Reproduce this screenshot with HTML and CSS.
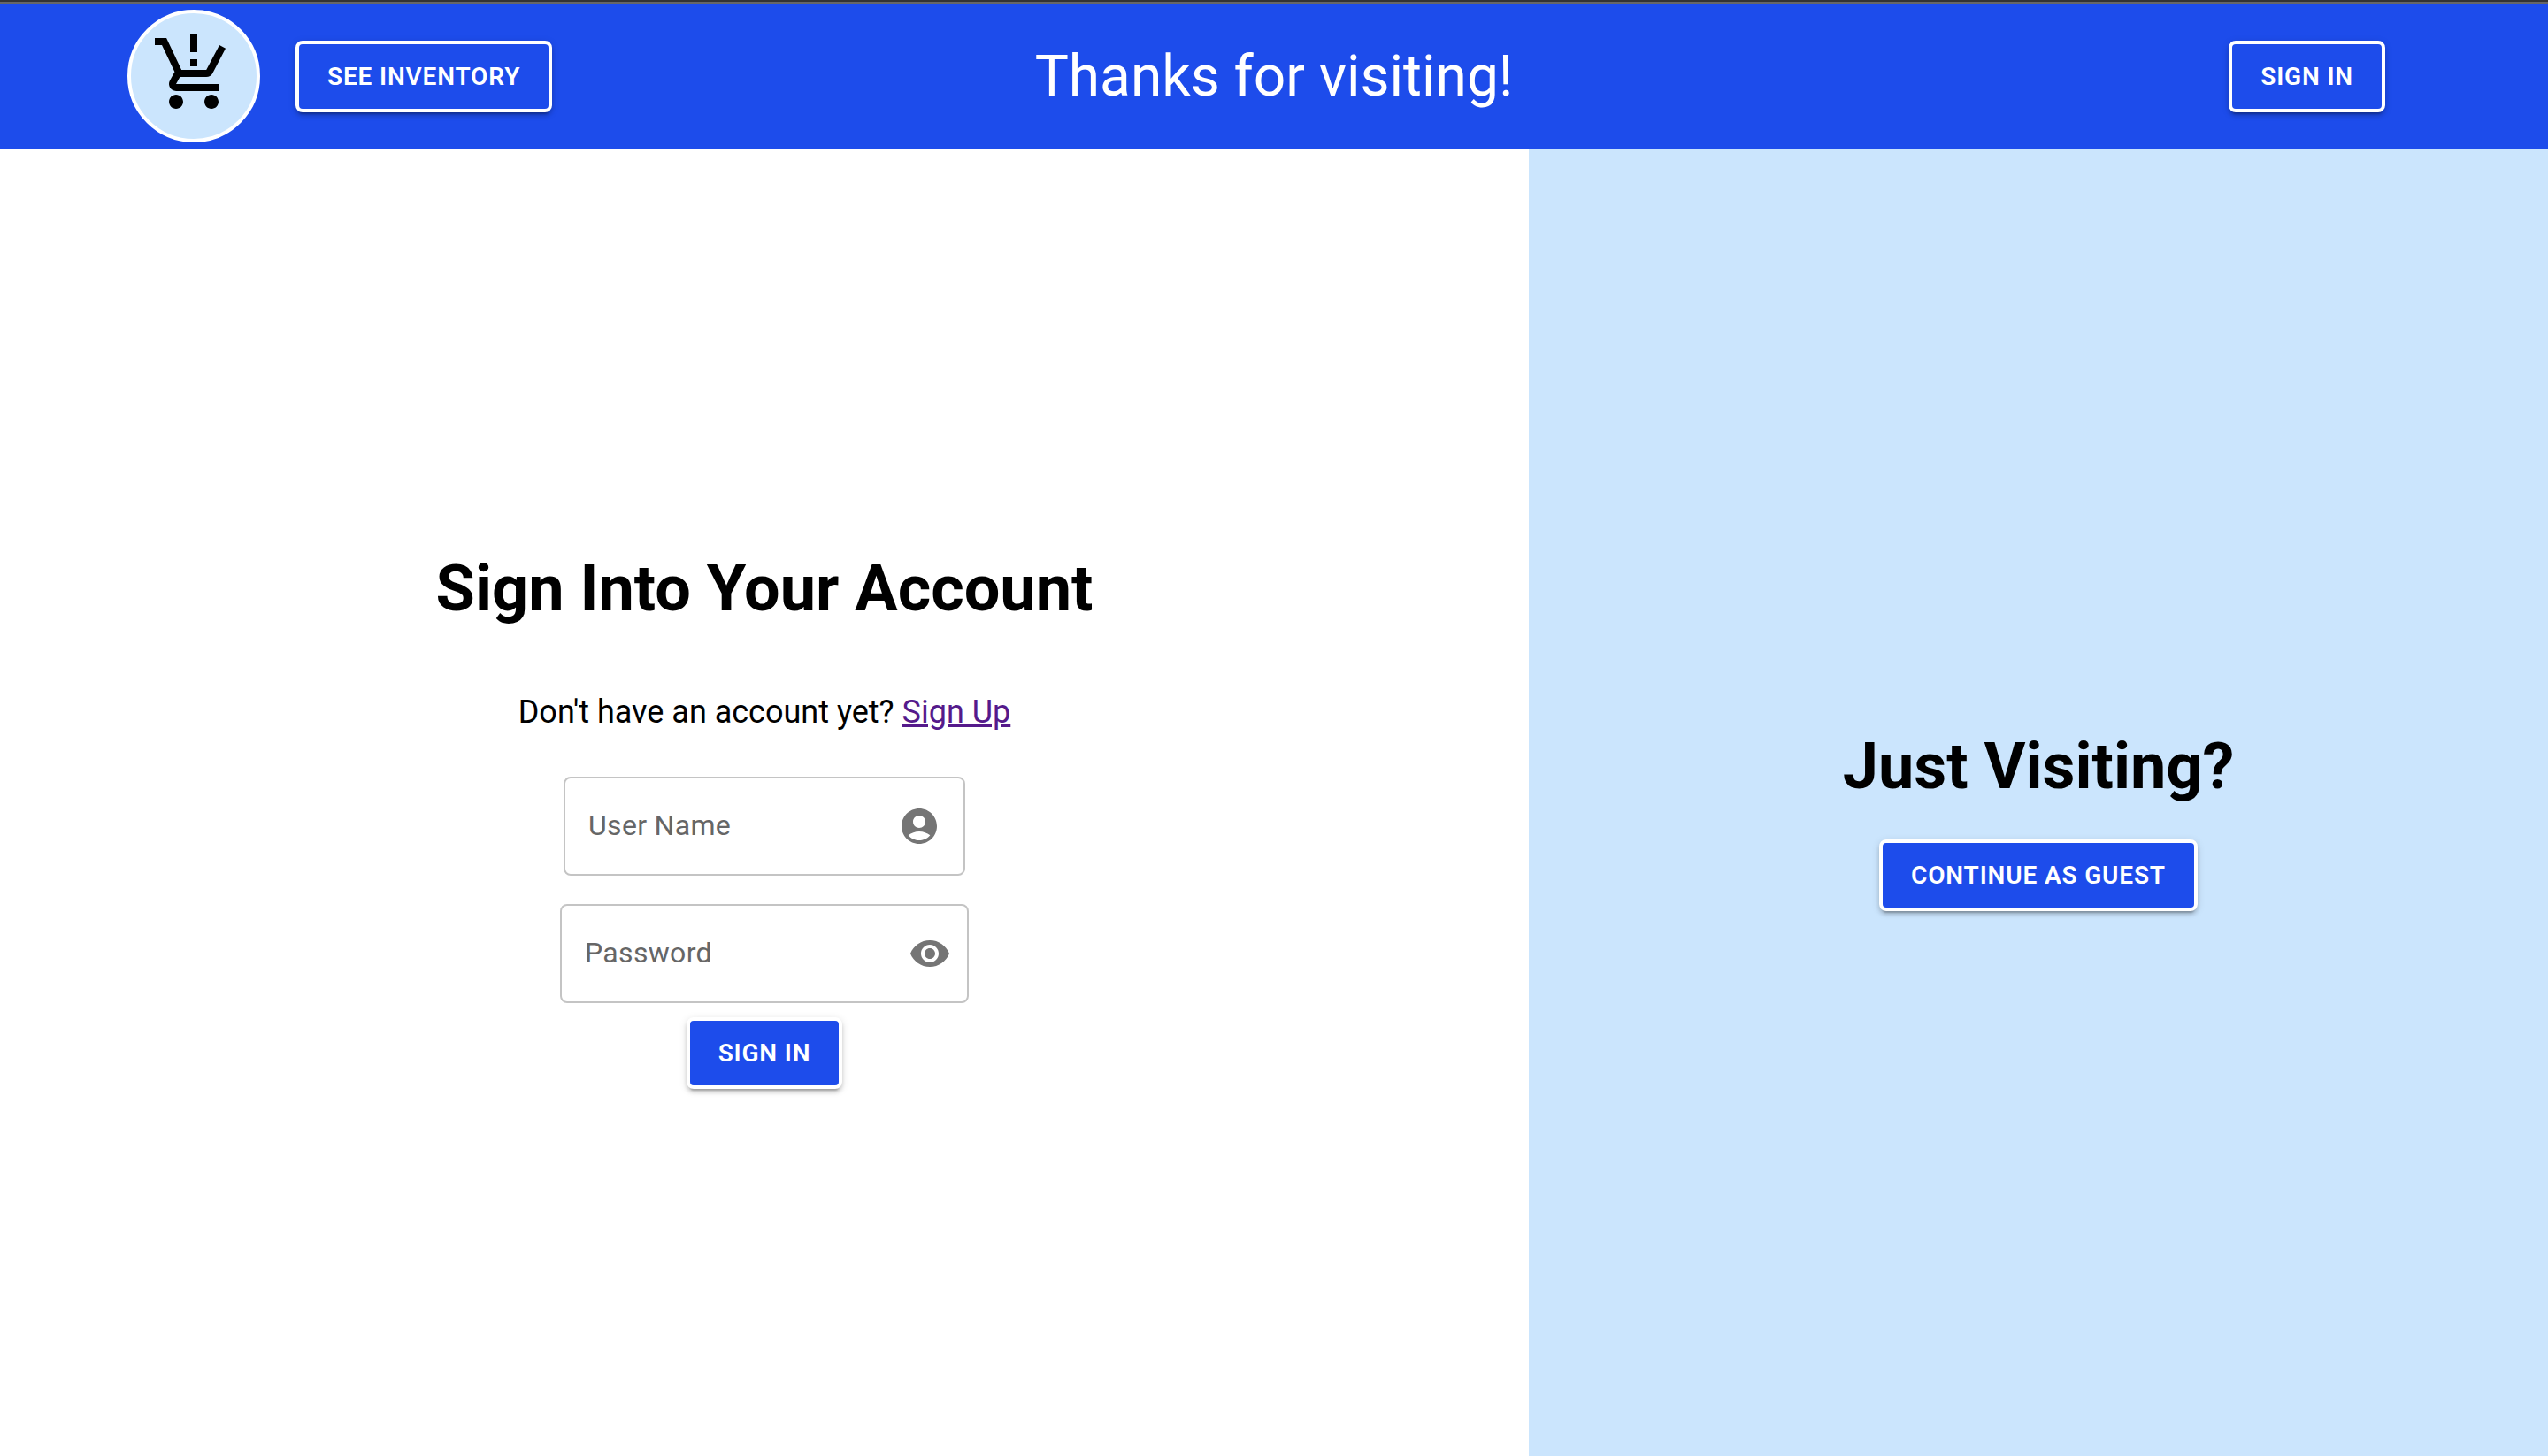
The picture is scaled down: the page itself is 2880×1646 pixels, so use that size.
FILE: index.html
```html
<!DOCTYPE html>
<html lang="en">
<head>
  <meta charset="utf-8">
  <meta name="viewport" content="width=device-width, initial-scale=1">
  <title>Sign In</title>
  <link rel="stylesheet" href="styles.css">
</head>
<body>
  <header class="topbar">
    <div class="topbar-start">
      <a class="logo" href="#" aria-label="Home">
        <svg class="logo-icon" viewBox="0 0 24 24" aria-hidden="true"><path d="M13 10h-2V8h2v2zm0-4h-2V1h2v5zM7 18c-1.100 0-1.990.9-1.990 2S5.900 22 7 22s2-.9 2-2-.9-2-2-2zm10 0c-1.100 0-1.990.9-1.990 2s.89 2 1.990 2 2-.9 2-2-.9-2-2-2zm-8.900-5h7.450c.75 0 1.410-.41 1.750-1.030L21 4.960 19.250 4l-3.700 7H8.530L4.270 2H1v2h2l3.600 7.590-1.350 2.440C4.520 15.370 5.480 17 7 17h12v-2H7l1.100-2z"/></svg>
      </a>
      <button class="button" type="button">See Inventory</button>
    </div>
    <div class="topbar-title">Thanks for visiting!</div>
    <div class="topbar-end">
      <button class="button" type="button">Sign In</button>
    </div>
  </header>
  <main class="panels">
    <section class="panel panel-account">
      <h1 class="heading">Sign Into Your Account</h1>
      <p class="signup">Don't have an account yet? <a class="signup-link" href="#">Sign Up</a></p>
      <form class="form">
        <div class="field">
          <input class="field-input" id="username" type="text" placeholder=" " autocomplete="username">
          <label class="field-label" for="username">User Name</label>
          <svg class="icon" viewBox="0 0 24 24" aria-hidden="true"><path d="M12 2C6.480 2 2 6.480 2 12s4.480 10 10 10 10-4.480 10-10S17.520 2 12 2zm0 4c1.930 0 3.500 1.570 3.500 3.500S13.930 13 12 13s-3.500-1.570-3.500-3.500S10.070 6 12 6zm0 14c-2.030 0-4.430-.82-6.140-2.880C7.550 15.800 9.680 15 12 15s4.450.8 6.140 2.120C16.430 19.180 14.030 20 12 20z"/></svg>
        </div>
        <div class="field field-password">
          <input class="field-input" id="password" type="password" placeholder=" " autocomplete="current-password">
          <label class="field-label" for="password">Password</label>
          <button class="icon-button" type="button" aria-label="Show password">
            <svg class="icon" viewBox="0 0 24 24" aria-hidden="true"><path d="M12 4.500C7 4.500 2.730 7.610 1 12c1.730 4.390 6 7.500 11 7.500s9.270-3.110 11-7.500c-1.730-4.390-6-7.500-11-7.500zM12 17c-2.760 0-5-2.240-5-5s2.240-5 5-5 5 2.240 5 5-2.240 5-5 5zm0-8c-1.660 0-3 1.340-3 3s1.340 3 3 3 3-1.340 3-3-1.340-3-3-3z"/></svg>
          </button>
        </div>
        <button class="button" type="submit">Sign In</button>
      </form>
    </section>
    <section class="panel panel-guest">
      <h2 class="heading">Just Visiting?</h2>
      <button class="button" type="button">Continue as Guest</button>
    </section>
  </main>
</body>
</html>
```
FILE: styles.css
```css
:root {
  --blue: #1d4ceb;
  --sky: #cbe5fd;
}

* {
  box-sizing: border-box;
}

body {
  display: flex;
  flex-direction: column;
  min-height: 100vh;
  margin: 0;
  border-top: 2px solid #333;
  background: #fff;
  color: #000;
  font-family: Roboto, "Liberation Sans", sans-serif;
}

.topbar {
  display: grid;
  grid-template-columns: 1fr auto 1fr;
  align-items: center;
  padding: 7px 5%;
  border-top: 2px solid #666;
  background: var(--blue);
}

.topbar-start {
  display: flex;
  align-items: center;
  gap: 40px;
}

.topbar-end {
  display: flex;
  justify-content: flex-end;
  padding-right: 40px;
}

.topbar-title {
  padding-top: 2px;
  color: #fff;
  font-size: 64px;
  line-height: 76px;
}

.logo {
  display: flex;
  align-items: center;
  justify-content: center;
  width: 150px;
  height: 150px;
  padding-bottom: 6px;
  border: 4px solid #fff;
  border-radius: 50%;
  background: var(--sky);
  color: #000;
}

.logo-icon {
  width: 96px;
  height: 96px;
  fill: currentColor;
}

.button {
  padding: 12px 32px;
  border: 4px solid #fff;
  border-radius: 8px;
  background: var(--blue);
  box-shadow: 0 6px 2px -4px rgba(0, 0, 0, 0.2), 0 4px 4px 0 rgba(0, 0, 0, 0.14), 0 2px 10px 0 rgba(0, 0, 0, 0.12);
  color: #fff;
  font-family: inherit;
  font-size: 28px;
  font-weight: 600;
  letter-spacing: 0.03em;
  line-height: 49px;
  text-transform: uppercase;
  cursor: pointer;
}

.panels {
  display: grid;
  flex: 1;
  grid-template-columns: 3fr 2fr;
}

.panel {
  display: flex;
  flex-direction: column;
  align-items: center;
  justify-content: center;
}

.panel-guest {
  background: var(--sky);
}

.heading {
  margin: 40px 0;
  font-size: 72px;
  font-weight: 700;
  line-height: 84px;
}

.signup {
  margin: 36px 0 52px;
  font-size: 36px;
  line-height: 42px;
}

.signup-link {
  color: #551a8b;
}

.form {
  display: flex;
  flex-direction: column;
  align-items: center;
}

.field {
  display: grid;
  grid-template-columns: 1fr auto;
  align-items: center;
  width: 454px;
  height: 112px;
  margin-bottom: 32px;
  padding: 0 26px;
  border: 2px solid #c4c4c4;
  border-radius: 8px;
}

.field-password {
  width: 462px;
  margin-bottom: 16px;
  padding-right: 18px;
}

.field-input,
.field-label {
  grid-area: 1 / 1;
  min-width: 0;
  padding: 0 0 2px;
  font-family: inherit;
  font-size: 32px;
  letter-spacing: 0.01em;
  line-height: 46px;
}

.field-input {
  width: 100%;
  border: 0;
  outline: 0;
  background: transparent;
}

.field-label {
  color: #666;
  pointer-events: none;
}

.field-input:not(:placeholder-shown) + .field-label {
  visibility: hidden;
}

.icon {
  display: block;
  width: 48px;
  height: 48px;
  fill: #757575;
}

.icon-button {
  padding: 0;
  border: 0;
  background: none;
  cursor: pointer;
}
```
